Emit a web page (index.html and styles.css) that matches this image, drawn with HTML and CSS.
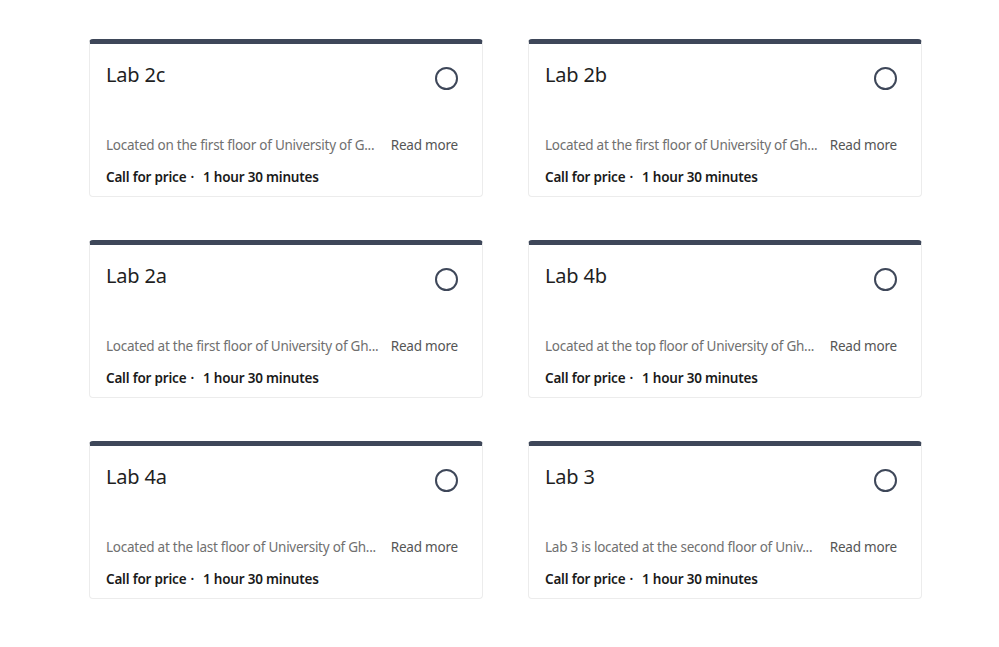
FILE: index.html
```html
<!DOCTYPE html>
<html lang="en">
<head>
<meta charset="utf-8">
<title>Labs</title>
<link rel="stylesheet" href="styles.css">
</head>
<body>
<main class="grid">
  <article class="card">
    <div class="card-head">
      <h2 class="title">Lab 2c</h2>
      <span class="radio"></span>
    </div>
    <div class="desc-row">
      <span class="desc">Located on the first floor of University of G...</span>
      <a class="more">Read more</a>
    </div>
    <div class="meta"><span>Call for price</span><span class="dot">·</span><span>1 hour 30 minutes</span></div>
  </article>
  <article class="card">
    <div class="card-head">
      <h2 class="title">Lab 2b</h2>
      <span class="radio"></span>
    </div>
    <div class="desc-row">
      <span class="desc">Located at the first floor of University of Gh...</span>
      <a class="more">Read more</a>
    </div>
    <div class="meta"><span>Call for price</span><span class="dot">·</span><span>1 hour 30 minutes</span></div>
  </article>
  <article class="card">
    <div class="card-head">
      <h2 class="title">Lab 2a</h2>
      <span class="radio"></span>
    </div>
    <div class="desc-row">
      <span class="desc">Located at the first floor of University of Gh...</span>
      <a class="more">Read more</a>
    </div>
    <div class="meta"><span>Call for price</span><span class="dot">·</span><span>1 hour 30 minutes</span></div>
  </article>
  <article class="card">
    <div class="card-head">
      <h2 class="title">Lab 4b</h2>
      <span class="radio"></span>
    </div>
    <div class="desc-row">
      <span class="desc">Located at the top floor of University of Gh...</span>
      <a class="more">Read more</a>
    </div>
    <div class="meta"><span>Call for price</span><span class="dot">·</span><span>1 hour 30 minutes</span></div>
  </article>
  <article class="card">
    <div class="card-head">
      <h2 class="title">Lab 4a</h2>
      <span class="radio"></span>
    </div>
    <div class="desc-row">
      <span class="desc">Located at the last floor of University of Gh...</span>
      <a class="more">Read more</a>
    </div>
    <div class="meta"><span>Call for price</span><span class="dot">·</span><span>1 hour 30 minutes</span></div>
  </article>
  <article class="card">
    <div class="card-head">
      <h2 class="title">Lab 3</h2>
      <span class="radio"></span>
    </div>
    <div class="desc-row">
      <span class="desc">Lab 3 is located at the second floor of Univ...</span>
      <a class="more">Read more</a>
    </div>
    <div class="meta"><span>Call for price</span><span class="dot">·</span><span>1 hour 30 minutes</span></div>
  </article>
</main>
</body>
</html>
```

FILE: styles.css
```css
html, body {
  margin: 0;
  padding: 0;
  background: #ffffff;
}

body {
  font-family: "Noto Sans", "Open Sans", sans-serif;
  color: #1f1f1f;
}

.grid {
  display: grid;
  grid-template-columns: 394px 394px;
  column-gap: 45px;
  row-gap: 43px;
  padding: 39px 0 0 89px;
}

.card {
  box-sizing: border-box;
  height: 158px;
  border: 1px solid #ececec;
  border-top: 5px solid #3e4759;
  border-radius: 4px;
  padding: 17px 24px 0 16px;
  display: flex;
  flex-direction: column;
}

.card-head {
  display: flex;
  justify-content: space-between;
  align-items: flex-start;
  height: 74px;
}

.title {
  margin: 0;
  font-size: 20px;
  line-height: 28px;
  font-weight: 400;
  color: #1f1f1f;
  letter-spacing: -0.2px;
}

.radio {
  box-sizing: border-box;
  width: 23px;
  height: 23px;
  margin-top: 6px;
  border: 2px solid #3e4759;
  border-radius: 50%;
}

.desc-row {
  display: flex;
  align-items: center;
  gap: 8px;
  font-size: 13.5px;
  line-height: 20px;
  height: 20px;
}

.desc {
  flex: 0 1 auto;
  min-width: 0;
  white-space: nowrap;
  color: #707070;
  letter-spacing: -0.25px;
}

.more {
  margin-left: auto;
  color: #555555;
  white-space: nowrap;
  letter-spacing: -0.2px;
}

.meta {
  margin-top: 12px;
  font-size: 13.5px;
  line-height: 20px;
  font-weight: 600;
  color: #1a1a1a;
  display: flex;
  letter-spacing: -0.2px;
}

.dot {
  margin: 0 9px 0 4px;
}
```
